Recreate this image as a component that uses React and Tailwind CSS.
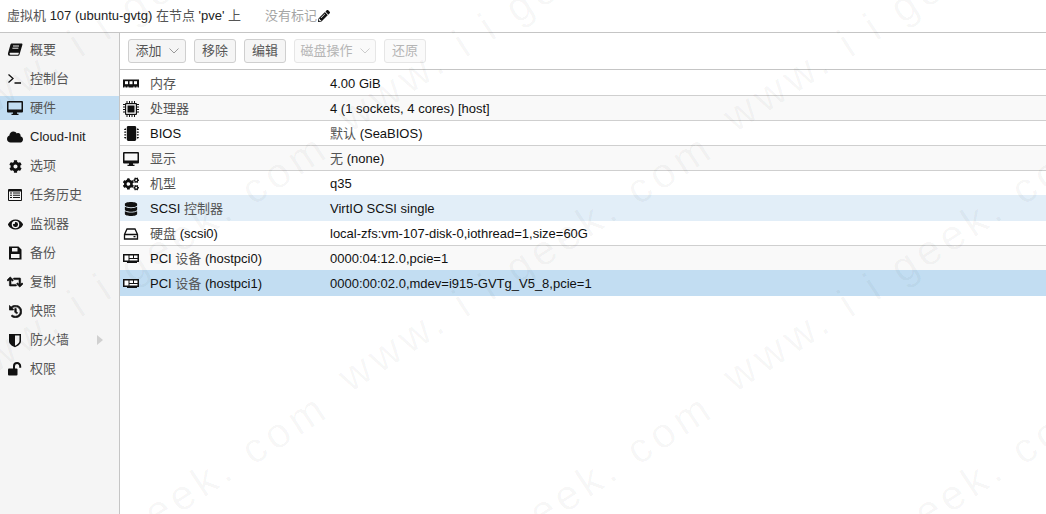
import { FaCloud, FaCog, FaCogs, FaEye, FaRetweet, FaHistory, FaMicrochip, FaDatabase, FaPencilAlt } from 'react-icons/fa'

const Svg = ({ w = 16, h = 16, children }) => (
  <svg width={w} height={h} viewBox={`0 0 ${w} ${h}`} fill="currentColor">{children}</svg>
)

const BookIcon = () => (
  <Svg>
    <path fillRule="evenodd" d="M5 1.5h9.5c.8 0 1.1.6.9 1.3l-2.8 9.4c-.3 1-1 1.6-2 1.6H3c-1.4 0-2.4-1-2-2.6L3.4 2.8C3.6 2 4.2 1.5 5 1.5zM3.8 10.8c-.9 0-1.2.4-1.2 1s.4.9 1 .9h7.2c.4 0 .7-.2.9-.7l.1-1.2z" />
    <path d="M6 4h6M5.4 6.2h6" stroke="#f5f5f5" strokeWidth="1" />
  </Svg>
)

const TerminalIcon = () => (
  <Svg>
    <path d="M1.5 3.5 6 7.5l-4.5 4M7.5 12H14" fill="none" stroke="currentColor" strokeWidth="1.3" />
  </Svg>
)

const DesktopIcon = () => (
  <Svg>
    <path fillRule="evenodd" d="M1 1h14a1 1 0 0 1 1 1v9.5a1 1 0 0 1-1 1H10v1.2h1.5v1.3h-7v-1.3H6v-1.2H1a1 1 0 0 1-1-1V2a1 1 0 0 1 1-1zM1.5 2.5v7h13v-7z" />
  </Svg>
)

const ListIcon = () => (
  <Svg>
    <rect x="1" y="2" width="14" height="12" rx="1" />
    <rect x="2" y="4.5" width="12" height="8.5" fill="#f5f5f5" />
    <path d="M3 5.5h2v1H3zM6 5.5h7v1H6zM3 7.7h2v1H3zM6 7.7h7v1H6zM3 9.9h2v1H3zM6 9.9h7v1H6z" />
  </Svg>
)

const FloppyIcon = () => (
  <Svg>
    <path fillRule="evenodd" d="M2 1.5h9.5L14.5 4.5V14.5H2zM5 3v3.5h5.5V3zM4 9v4h8.5V9z" />
    <rect x="8.5" y="3.5" width="1.2" height="2.5" fill="#f5f5f5" />
  </Svg>
)

const ShieldIcon = () => (
  <Svg>
    <path fillRule="evenodd" d="M2 2h12v7c0 3.2-3.5 5.2-6 6.3C5.5 14.2 2 12.2 2 9zM8 3.5v10.2c1.8-.9 4.5-2.5 4.5-4.7V3.5z" />
  </Svg>
)

const UnlockIcon = () => (
  <Svg>
    <rect x="1" y="7.5" width="9.5" height="7" rx="1" />
    <path d="M7 8V5.2a3 3 0 0 1 6.2 0v1.6" fill="none" stroke="currentColor" strokeWidth="2" />
  </Svg>
)

const MemoryIcon = () => (
  <Svg>
    <path d="M0 3.5h16v8h-1.5v-1h-1v1h-2v-1h-1v1h-5v-1h-1v1h-2v-1h-1v1H0z" />
    <rect x="2" y="5.2" width="3" height="3" fill="#fff" />
    <rect x="6.5" y="5.2" width="3" height="3" fill="#fff" />
    <rect x="11" y="5.2" width="3" height="3" fill="#fff" />
  </Svg>
)

const CpuIcon = () => (
  <Svg>
    <rect x="2" y="2" width="12" height="12" rx="1" />
    <rect x="3.2" y="3.2" width="9.6" height="9.6" fill="#fff" />
    <rect x="4.5" y="4.5" width="7" height="7" />
    <path d="M0 3h2v1H0zM0 5.5h2v1H0zM0 8h2v1H0zM0 10.5h2v1H0zM14 3h2v1h-2zM14 5.5h2v1h-2zM14 8h2v1h-2zM14 10.5h2v1h-2zM3.5 0h1v2h-1zM6 0h1v2H6zM8.5 0h1v2h-1zM11 0h1v2h-1zM3.5 14h1v2h-1zM6 14h1v2H6zM8.5 14h1v2h-1zM11 14h1v2h-1z" />
  </Svg>
)

const HddIcon = () => (
  <Svg>
    <path d="M4 3h8l2.5 5.5v4.5h-13V8.5zM1.5 8.5h13" fill="none" stroke="currentColor" strokeWidth="1.3" />
    <rect x="10.5" y="10" width="2" height="1.3" />
  </Svg>
)

const PciIcon = () => (
  <Svg>
    <path d="M0 3h16v8h-2v1H4v-1H0z" />
    <rect x="1.5" y="4.5" width="4" height="5" fill="#fff" />
    <rect x="6.5" y="4.5" width="3.5" height="2.5" fill="#fff" />
    <rect x="11" y="4.5" width="3.5" height="2.5" fill="#fff" />
    <rect x="6.5" y="8" width="8" height="1.5" fill="#fff" />
  </Svg>
)

const NAV = [
  { label: '概要', icon: <BookIcon /> },
  { label: '控制台', icon: <TerminalIcon /> },
  { label: '硬件', icon: <DesktopIcon />, active: true },
  { label: 'Cloud-Init', icon: <FaCloud size={16} /> },
  { label: '选项', icon: <FaCog size={13} /> },
  { label: '任务历史', icon: <ListIcon /> },
  { label: '监视器', icon: <FaEye size={15} /> },
  { label: '备份', icon: <FloppyIcon /> },
  { label: '复制', icon: <FaRetweet size={16} stroke="currentColor" strokeWidth={24} /> },
  { label: '快照', icon: <FaHistory size={13} stroke="currentColor" strokeWidth={24} /> },
  { label: '防火墙', icon: <ShieldIcon />, arrow: true },
  { label: '权限', icon: <UnlockIcon /> },
]

const ROWS = [
  { name: '内存', value: '4.00 GiB', icon: <MemoryIcon />, line: 'border-t-white' },
  { name: '处理器', value: '4 (1 sockets, 4 cores) [host]', icon: <CpuIcon /> },
  { name: 'BIOS', value: '默认 (SeaBIOS)', icon: <FaMicrochip size={15} /> },
  { name: '显示', value: '无 (none)', icon: <DesktopIcon /> },
  { name: '机型', value: 'q35', icon: <FaCogs size={16} /> },
  { name: 'SCSI 控制器', value: 'VirtIO SCSI single', icon: <FaDatabase size={14} />, bg: 'bg-[#e2eef8]', line: 'border-t-[#e2eef8]' },
  { name: '硬盘 (scsi0)', value: 'local-zfs:vm-107-disk-0,iothread=1,size=60G', icon: <HddIcon />, line: 'border-t-[#e2eef8]' },
  { name: 'PCI 设备 (hostpci0)', value: '0000:04:12.0,pcie=1', icon: <PciIcon /> },
  { name: 'PCI 设备 (hostpci1)', value: '0000:00:02.0,mdev=i915-GVTg_V5_8,pcie=1', icon: <PciIcon />, bg: 'bg-[#c2ddf2]', line: 'border-t-[#c2ddf2]' },
]

const BUTTONS = [
  { label: '添加', menu: true, w: 'w-[58px]' },
  { label: '移除', w: 'w-[42px]' },
  { label: '编辑', w: 'w-[42px]' },
  { label: '磁盘操作', menu: true, disabled: true, w: 'w-[82px]' },
  { label: '还原', disabled: true, w: 'w-[42px]' },
]

// faint site watermark, tiled over the whole page
const MARKS = [
  [141, 2], [526, 2], [911, 2],
  [141, 262], [526, 262], [911, 262],
  [141, 522], [526, 522], [911, 522],
]

// chinese glyphs render much lighter than latin in the original
function Txt({ children, cjk = 'text-[#555]' }) {
  return children.split(/([\u4e00-\u9fff]+)/).map((part, i) => (
    <span key={i} className={i % 2 ? cjk : undefined}>{part}</span>
  ))
}

function Chevron({ color }) {
  return (
    <svg width="10" height="6" viewBox="0 0 10 6" className="ml-[7px]">
      <path d="M.5.5 5 5 9.5.5" fill="none" stroke={color} strokeWidth="1" />
    </svg>
  )
}

export default function App() {
  return (
    <div className="relative w-[1046px] h-[514px] overflow-hidden bg-white text-[13px] text-[#111] font-['Liberation_Sans','Noto_Sans_CJK_SC',sans-serif]">
      <div className="flex items-center h-[33px] pl-[7px] border-b border-[#c5c5c5] text-[#222]">
        <span><Txt>{"虚拟机 107 (ubuntu-gvtg) 在节点 'pve' 上"}</Txt></span>
        <span className="ml-6 text-[#a5a5a5]">没有标记</span>
        <FaPencilAlt size={12} className="ml-px text-[#111]" />
      </div>

      <div className="flex h-[481px]">
        <div className="w-[120px] shrink-0 bg-[#f5f5f5] border-r border-[#c5c5c5] pt-[5px] flex flex-col gap-[5px]">
          {NAV.map((n) => (
            <div key={n.label} className={`flex items-center h-6 ${n.active ? 'bg-[#c2ddf2]' : ''}`}>
              <span className="w-[30px] shrink-0 flex justify-center text-[#111]">{n.icon}</span>
              <span className="text-[#222]"><Txt>{n.label}</Txt></span>
              {n.arrow && (
                <span className="ml-[28px] w-0 h-0 border-y-[5px] border-y-transparent border-l-[6px] border-l-[#d0d0d0]" />
              )}
            </div>
          ))}
        </div>

        <div className="flex-1 min-w-0">
          <div className="flex items-center gap-2 h-[37px] pl-2 border-b border-[#c5c5c5]">
            {BUTTONS.map((b) => (
              <div
                key={b.label}
                className={`flex items-center justify-center h-6 rounded-[3px] border ${b.w} ${
                  b.disabled ? 'border-[#e6e6e6] bg-[#fafafa] text-[#b5b5b5]' : 'border-[#cfcfcf] bg-[#f5f5f5] text-[#555]'
                }`}
              >
                <span>{b.label}</span>
                {b.menu && <Chevron color={b.disabled ? '#ccc' : '#999'} />}
              </div>
            ))}
          </div>

          {ROWS.map((r, i) => (
            <div
              key={r.name}
              className={`flex items-center h-[25px] pt-px border-t ${r.line || 'border-t-[#cfcfcf]'} ${r.bg || (i % 2 ? 'bg-[#f9f9f9]' : 'bg-white')}`}
            >
              <span className="w-[30px] shrink-0 pl-[3px] flex items-center text-[#111]">
                <span className="w-4 flex justify-center">{r.icon}</span>
              </span>
              <span className="w-[180px] shrink-0"><Txt>{r.name}</Txt></span>
              <span><Txt>{r.value}</Txt></span>
            </div>
          ))}
          <div className="h-px bg-[#c2ddf2]" />
        </div>
      </div>

      <div className="absolute inset-0 pointer-events-none">
        {MARKS.map(([x, y]) => (
          <span
            key={`${x}-${y}`}
            className="absolute whitespace-nowrap text-[42px] tracking-[5px] leading-none text-[#00000009] -translate-x-1/2 -translate-y-1/2 -rotate-[33deg] font-['Liberation_Sans',sans-serif]"
            style={{ left: x, top: y }}
          >
            www. i i geek. com
          </span>
        ))}
      </div>
    </div>
  )
}
